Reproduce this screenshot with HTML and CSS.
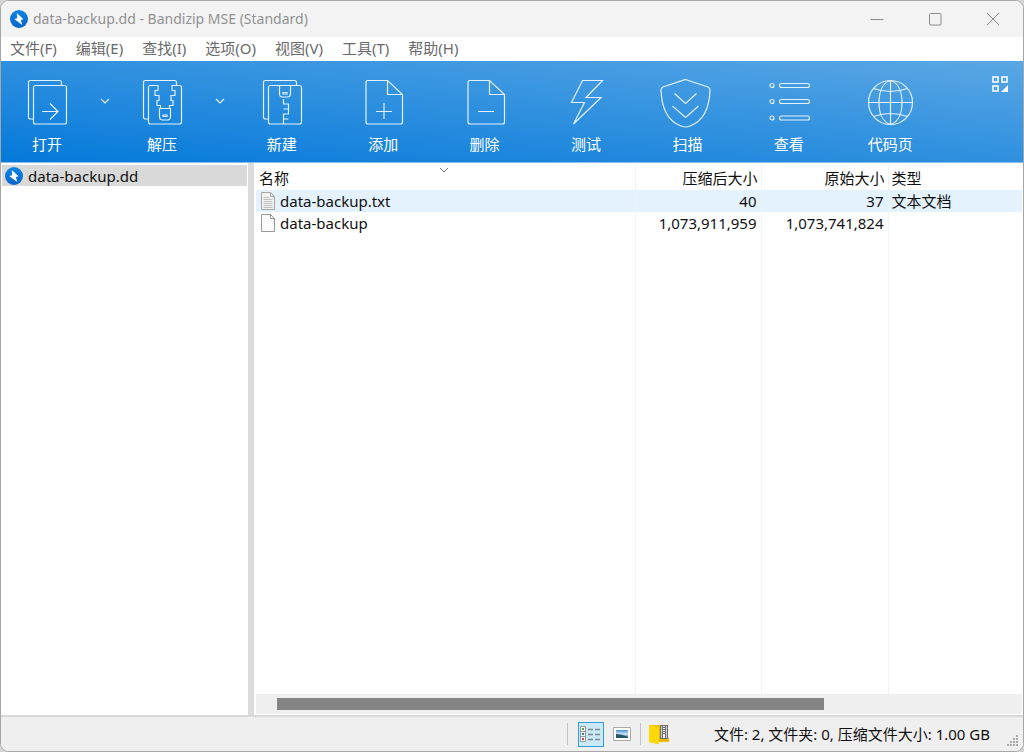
FILE: index.html
```html
<!DOCTYPE html>
<html lang="zh-CN">
<head>
<meta charset="utf-8">
<title>data-backup.dd - Bandizip MSE (Standard)</title>
<link rel="stylesheet" href="styles.css">
</head>
<body>
<svg class="defs" aria-hidden="true">
  <defs>
    <linearGradient id="blue" x1="0" y1="0" x2="0" y2="1"><stop offset="0" stop-color="#0c86e2"/><stop offset="1" stop-color="#0763cc"/></linearGradient>
    <linearGradient id="sky" x1="0" y1="0" x2="0" y2="1"><stop offset="0" stop-color="#4a8fdc"/><stop offset=".5" stop-color="#cfe6f8"/><stop offset="1" stop-color="#2c5f73"/></linearGradient>
    <symbol id="app" viewBox="0 0 18 18"><circle cx="9" cy="9" r="9" fill="url(#blue)"/><path d="M6.800 3 13.500 9.200 10.900 9.900 12.200 15 4.200 8.900 7.200 8.200Z" fill="#fff"/></symbol>
  </defs>
</svg>
<div class="window">
  <header class="titlebar">
    <svg class="app-icon"><use href="#app"/></svg>
    <h1 class="title">data-backup.dd - Bandizip MSE (Standard)</h1>
    <div class="captions">
      <button class="caption" aria-label="最小化"><svg width="14" height="14"><path d="M.5 7.500h13"/></svg></button>
      <button class="caption" aria-label="最大化"><svg width="14" height="14"><rect x="1.500" y="1.500" width="11.500" height="11.500" rx="1"/></svg></button>
      <button class="caption" aria-label="关闭"><svg width="14" height="14"><path d="M1 1l12 12M13 1 1 13"/></svg></button>
    </div>
  </header>
  <nav class="menu">
    <button>文件(F)</button><button>编辑(E)</button><button>查找(I)</button><button>选项(O)</button><button>视图(V)</button><button>工具(T)</button><button>帮助(H)</button>
  </nav>
  <div class="toolbar">
    <button class="tool split"><svg class="glyph"><path d="M11.500 41h-3q-2 0-2-2V4.500q0-2 2-2h29q2 0 2 2v3"/><rect x="11.500" y="7.500" width="33" height="38.500" rx="2"/><path d="M20 33.500h16M28 25.500l8 8-8 8"/></svg>打开</button>
    <button class="drop" aria-label="打开选项"><svg width="10" height="6"><path d="M1 1l4 4 4-4"/></svg></button>
    <button class="tool split"><svg class="glyph"><path d="M11.500 41h-3q-2 0-2-2V4.500q0-2 2-2h29q2 0 2 2v3"/><path d="M22.500 30.500h1v-3h-3.500v-5h2v-5h-4v-5h3v-5h-7.500q-2 0-2 2V44q0 2 2 2h29q2 0 2-2V9.500q0-2-2-2h-7.500v5h3v5h-4v5h2v5h-3.500v3h1"/><path d="M22.500 30.500h11v8q0 3.500-3 3.500h-5q-3 0-3-3.500ZM26 37h4v1.500h-4Z"/></svg>解压</button>
    <button class="drop" aria-label="解压选项"><svg width="10" height="6"><path d="M1 1l4 4 4-4"/></svg></button>
    <div class="tools">
      <button class="tool"><svg class="glyph"><path d="M11.500 41h-3q-2 0-2-2V4.500q0-2 2-2h29q2 0 2 2v3"/><rect x="11.500" y="7.500" width="33" height="38.500" rx="2"/><path d="M22.500 7.500v8q0 3.500 3 3.500h5q3 0 3-3.500v-8M26 14.500h4v1.500h-4ZM26.500 21v5h5v5h-5M31.500 31h-5M26.500 31h5v5h-5v5h5M31.500 41h-5v5"/></svg>新建</button>
      <button class="tool"><svg class="glyph"><path d="M29.500 2.500H10q-2 0-2 2V44q0 2 2 2h32.500q2 0 2-2V16.500ZV16.500h15M26 25v16M18 33.500h16"/></svg>添加</button>
      <button class="tool"><svg class="glyph"><path d="M29.500 2.500H10q-2 0-2 2V44q0 2 2 2h32.500q2 0 2-2V16.500ZV16.500h15M18 33.500h16"/></svg>删除</button>
      <button class="tool"><svg class="glyph"><path d="M21.500 2.500h20L25 19.500h15L12.500 46l11-21.500h-13Z"/></svg>测试</button>
      <button class="tool"><svg class="glyph"><path d="M23.500 1.500 46 9q2 1 2 3-1 29-20 36-4.500 2-9 0Q0 41-1 12q0-2 2-3ZM12.500 15.500l11 10 11-10M10.500 28l13 11.500L36.500 28"/></svg>扫描</button>
      <button class="tool"><svg class="glyph"><circle cx="8" cy="7.500" r="2"/><circle cx="8" cy="23.500" r="2"/><circle cx="8" cy="40" r="2"/><rect x="15.500" y="5.500" width="30" height="4" rx="2"/><rect x="15.500" y="21.500" width="30" height="4" rx="2"/><rect x="15.500" y="38" width="30" height="4" rx="2"/></svg>查看</button>
      <button class="tool"><svg class="glyph"><circle cx="25.500" cy="24.500" r="22"/><path d="M25.500 2.500v44M3.500 24.500h44M25.500 2.500C17 5 14 15 14 24.500S17 44 25.500 46.500M25.500 2.500C34 5 37 15 37 24.500S34 44 25.500 46.500M8.500 10.500q17 6 34 0M8.500 38.500q17-6 34 0"/></svg>代码页</button>
    </div>
    <button class="layout" aria-label="布局"><svg width="16" height="16"><path d="M1 1h5v5H1ZM10 1h5v5h-5ZM1 10h5v5H1Z" fill="none" stroke="#fff" stroke-width="1.500"/><path d="M16 9v7H9Z" fill="#fff"/></svg></button>
  </div>
  <main class="main">
    <aside class="tree"><button class="node"><svg class="app-icon"><use href="#app"/></svg>data-backup.dd</button></aside>
    <section class="list">
      <table class="files">
        <colgroup><col class="c-name"><col class="c-packed"><col class="c-size"><col></colgroup>
        <thead><tr><th>名称<svg class="sort" width="10" height="6"><path d="M1 1l4 4 4-4"/></svg></th><th class="num">压缩后大小</th><th class="num">原始大小</th><th>类型</th></tr></thead>
        <tbody>
          <tr class="selected"><td><span class="file"><svg width="16" height="18"><path d="M1.500.5h9l4 4v13h-13Z" fill="#f4f4f2" stroke="#a6a6a6"/><path d="M10.500.5v4h4" fill="none" stroke="#a6a6a6"/><path d="M3.500 5.500h6M3.500 7.500h9M3.500 9.500h9M3.500 11.500h9M3.500 13.500h9M3.500 15.500h9" stroke="#c0c0c0"/></svg>data-backup.txt</span></td><td class="num">40</td><td class="num">37</td><td>文本文档</td></tr>
          <tr><td><span class="file"><svg width="16" height="18"><path d="M1.500.5h9l4 4v13h-13Z" fill="#fbfbfb" stroke="#999"/><path d="M10.500.5v4h4" fill="none" stroke="#999"/></svg>data-backup</span></td><td class="num">1,073,911,959</td><td class="num">1,073,741,824</td><td></td></tr>
          <tr class="rest"><td></td><td></td><td></td><td></td></tr>
        </tbody>
      </table>
      <div class="scroll"><div class="thumb"></div></div>
    </section>
  </main>
  <footer class="status">
    <span class="sep"></span>
    <button class="view on" aria-label="详细信息"><svg width="22" height="18"><path d="M.5 1.500h5v15h-5ZM.5 6.500h5M.5 11.500h5" fill="#fff" stroke="#999"/><path d="M2 4h2" stroke="#48a060" stroke-width="2"/><path d="M2 9h2" stroke="#3878c8" stroke-width="2"/><path d="M2 14h2" stroke="#d84040" stroke-width="2"/><path d="M8 4.500h5M15 4.500h5M8 9.500h5M15 9.500h5M8 14.500h5M15 14.500h5" stroke="#7c888e" stroke-width="1.500"/></svg></button>
    <button class="view" aria-label="缩略图"><svg width="18" height="14"><path d="M.5.5h17v13H.5Z" fill="#fff" stroke="#aaa"/><path d="M3 3h12v8H3Z" fill="url(#sky)"/><path d="M3 7q5 0 12 3v1H3Z" fill="#25566c"/></svg></button>
    <span class="sep"></span>
    <button class="view" aria-label="压缩包"><svg width="20" height="22"><path d="M0 2h18v12l2 1v4H9v2L0 19Z" fill="#f5b70c"/><path d="M0 2l10 2v17L0 19Z" fill="#ffd808"/><path d="M11 2h8v14h-8Z" fill="#707070"/><path d="M12.500 3v12M17.500 3v12" stroke="#ccc"/><path d="M15 3v8" stroke="#fff" stroke-dasharray="1 1" stroke-width="2"/><path d="M14 11h2v4h-2Z" fill="#eee"/></svg></button>
    <p class="summary">文件: 2, 文件夹: 0, 压缩文件大小: 1.00 GB</p>
    <svg class="grip" width="12" height="12"><path d="M9 1h2M9 4h2M6 4h2M9 7h2M6 7h2M3 7h2M9 10h2M6 10h2M3 10h2M0 10h2" stroke="#aaa" stroke-width="2"/></svg>
  </footer>
</div>
</body>
</html>
```

FILE: styles.css
```css
* { box-sizing: border-box; }
body {
  margin: 0;
  background: #d4d4d4;
  color: #111;
  font: 15px/22px "Noto Sans", "Noto Sans CJK SC", sans-serif;
}
button {
  margin: 0;
  padding: 0;
  border: 0;
  background: none;
  color: inherit;
  font: inherit;
}
svg { flex: none; }
.defs { position: absolute; width: 0; height: 0; }

.window {
  display: flex;
  flex-direction: column;
  height: 100vh;
  border: 1px solid #a6a6a6;
  border-radius: 9px;
  background: #fff;
  overflow: hidden;
}

.titlebar {
  display: flex;
  align-items: center;
  height: 36px;
  padding-left: 9px;
  background: #f3f3f3;
  color: #929292;
}
.app-icon { width: 18px; height: 18px; }
.title { margin: 0 0 0 5px; font-size: 14px; font-weight: 400; }
.captions { display: flex; margin-left: auto; padding-right: 1px; }
.caption {
  display: flex;
  align-items: center;
  justify-content: center;
  width: 58px;
  height: 36px;
}
.caption svg { fill: none; stroke: #8c8c8c; }

.menu {
  display: flex;
  gap: 19px;
  height: 24px;
  padding-left: 9px;
  color: #6a6a6a;
}
.menu button { height: 22px; }

.toolbar {
  display: flex;
  height: 102px;
  border-bottom: 1px solid #8dbde6;
  background: linear-gradient(to bottom left, #5aa7e4, #0479da);
  color: #fff;
}
.tool {
  display: flex;
  flex-direction: column;
  align-items: center;
  padding-top: 17px;
}
.split { width: 92px; }
.glyph {
  width: 50px;
  height: 50px;
  margin-bottom: 5px;
  overflow: visible;
}
.glyph, .drop svg {
  fill: none;
  stroke: #e3f1fc;
  stroke-width: 1.2;
}
.drop { width: 23px; height: 80px; }
.drop svg { display: block; margin: auto; }
.tools {
  display: grid;
  grid-template-columns: repeat(7, 1fr);
  width: 710px;
}
.layout { align-self: flex-start; margin: 15px 15px 0 auto; }
.layout svg { display: block; }

.main { display: flex; flex: 1; min-height: 0; }
.tree {
  width: 253px;
  padding: 2px 1px;
  border-right: 6px solid #dcdcdc;
}
.node {
  display: flex;
  align-items: center;
  gap: 5px;
  width: 100%;
  height: 21px;
  padding-left: 3px;
  background: #d9d9d9;
}

.list {
  display: flex;
  flex: 1;
  flex-direction: column;
  min-width: 0;
  padding: 1px 1px 1px 2px;
}
.files {
  flex: 1;
  width: 100%;
  border-collapse: collapse;
  table-layout: fixed;
}
.c-name { width: 379px; }
.c-packed { width: 126px; }
.c-size { width: 127px; }
th, td {
  height: 22px;
  padding: 0 4px 0 3px;
  border-right: 1px solid #f0f3f6;
  font-weight: 400;
  text-align: left;
}
th:last-child, td:last-child { border-right: 0; }
th { position: relative; height: 26px; padding-top: 2px; padding-right: 3px; }
.num { text-align: right; }
.sort {
  position: absolute;
  top: 3px;
  left: 50%;
  margin-left: -6px;
  fill: none;
  stroke: #777;
}
.selected { background: #e4f2fe; }
.rest td { height: auto; }
.file { display: flex; align-items: center; gap: 4px; padding-left: 1px; }
.scroll {
  height: 20px;
  padding: 4px 198px 4px 21px;
  background: #f0f0f0;
}
.thumb { height: 12px; background: #858585; }

.status {
  display: flex;
  align-items: center;
  justify-content: flex-end;
  height: 36px;
  border-top: 2px solid #d9d9d9;
  background: #efefef;
}
.sep { width: 1px; height: 22px; background: #c4c4c4; }
.view {
  display: flex;
  align-items: center;
  justify-content: center;
  width: 36px;
}
.on {
  width: 26px;
  height: 25px;
  margin-left: 10px;
  border: 1px solid #2d9fda;
  background: #cbe8f7;
}
.summary { margin: 0 17px 0 37px; }
.grip { align-self: flex-end; margin: 0 4px 4px 0; }
```
